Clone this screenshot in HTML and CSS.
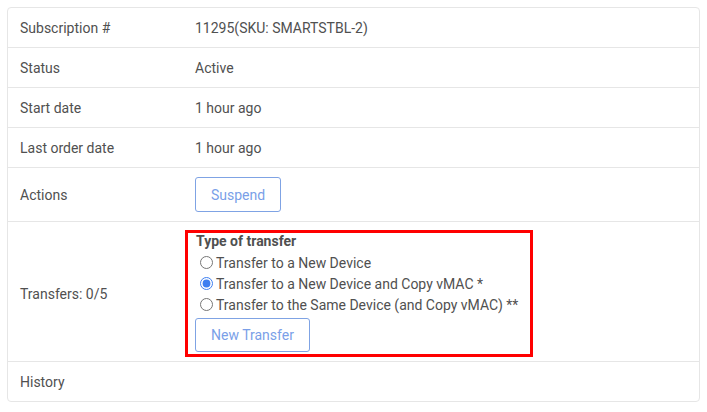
FILE: index.html
```html
<!DOCTYPE html>
<html>
<head>
<meta charset="utf-8">
<link rel="stylesheet" href="styles.css">
</head>
<body>
<div class="card">
  <div class="row">
    <div class="label">Subscription #</div>
    <div class="value">11295(SKU: SMARTSTBL-2)</div>
  </div>
  <div class="row">
    <div class="label">Status</div>
    <div class="value">Active</div>
  </div>
  <div class="row">
    <div class="label">Start date</div>
    <div class="value">1 hour ago</div>
  </div>
  <div class="row">
    <div class="label">Last order date</div>
    <div class="value">1 hour ago</div>
  </div>
  <div class="row row-actions">
    <div class="label">Actions</div>
    <div class="value"><button class="btn">Suspend</button></div>
  </div>
  <div class="row row-transfers">
    <div class="label">Transfers: 0/5</div>
    <div class="value">
      <form class="transfer-box">
        <div class="transfer-title">Type of transfer</div>
        <label class="opt"><input type="radio" name="t"> Transfer to a New Device</label>
        <label class="opt"><input type="radio" name="t" checked> Transfer to a New Device and Copy vMAC *</label>
        <label class="opt"><input type="radio" name="t"> Transfer to the Same Device (and Copy vMAC) **</label>
        <button type="button" class="btn btn-transfer">New Transfer</button>
      </form>
    </div>
  </div>
  <div class="row">
    <div class="label">History</div>
    <div class="value"></div>
  </div>
</div>
</body>
</html>
```

FILE: styles.css
```css
html, body {
  margin: 0;
  padding: 0;
  background: #ffffff;
}
body {
  padding: 7px 7px 0 7px;
  font-family: Roboto, "Liberation Sans", sans-serif;
  font-size: 14px;
  color: #505050;
}
.card {
  border: 1px solid #e6e6e6;
  border-radius: 4px;
  box-sizing: border-box;
  width: 693px;
}
.row {
  display: flex;
  align-items: center;
  box-sizing: border-box;
  min-height: 40px;
  border-bottom: 1px solid #e6e6e6;
}
.row:last-child {
  border-bottom: none;
  min-height: 39px;
}
.label {
  width: 175px;
  padding-left: 12px;
  box-sizing: border-box;
  flex: none;
}
.value {
  padding-left: 12px;
  flex: 1;
}
.row-actions {
  padding: 9px 0;
}
.row-transfers {
  padding: 8px 0 4px 0;
}
.row-transfers .value {
  padding-left: 2px;
}
.btn {
  font-family: Roboto, "Liberation Sans", sans-serif;
  font-size: 14px;
  color: #7a9fe8;
  background: #ffffff;
  border: 1px solid #7fa3e4;
  border-radius: 3px;
  height: 35px;
  padding: 0 15px;
  margin: 0;
  display: block;
}
.transfer-box {
  margin: 0;
  width: 328px;
  border: 3px solid #ff0000;
  padding: 0 7px 2px 7px;
  display: flex;
  flex-direction: column;
  align-items: flex-start;
}
.transfer-title {
  font-weight: 700;
  line-height: 17px;
  margin-left: 1px;
}
.opt {
  display: flex;
  align-items: center;
  height: 21px;
  white-space: nowrap;
}
.opt:first-of-type {
  margin-top: 2px;
}
.opt input {
  margin: 0 3px 0 5px;
  width: 13px;
  height: 13px;
  accent-color: #3d7ef0;
}
.btn-transfer {
  margin-top: 3px;
  height: 34px;
}
```
